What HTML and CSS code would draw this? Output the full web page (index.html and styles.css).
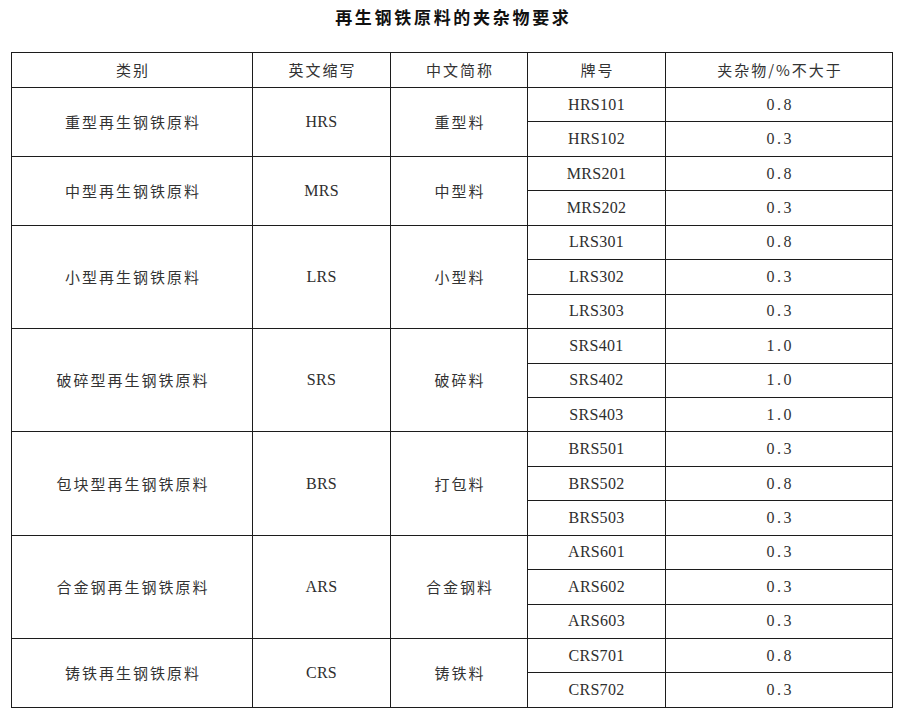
FILE: index.html
```html
<!DOCTYPE html>
<html lang="zh">
<head>
<meta charset="utf-8">
<title>再生钢铁原料的夹杂物要求</title>
<link rel="stylesheet" href="styles.css">
</head>
<body>
<h1 class="title">再生钢铁原料的夹杂物要求</h1>
<table class="spec">
  <colgroup>
    <col class="c1"><col class="c2"><col class="c3"><col class="c4"><col class="c5">
  </colgroup>
  <thead>
    <tr class="head">
      <th class="zh">类别</th><th class="zh">英文缩写</th><th class="zh">中文简称</th><th class="zh">牌号</th><th class="zh">夹杂物/%不大于</th>
    </tr>
  </thead>
  <tbody>
    <tr><td rowspan="2" class="zh">重型再生钢铁原料</td><td rowspan="2" class="en">HRS</td><td rowspan="2" class="zh">重型料</td><td class="en">HRS101</td><td class="num">0.8</td></tr>
    <tr><td class="en">HRS102</td><td class="num">0.3</td></tr>

    <tr><td rowspan="2" class="zh">中型再生钢铁原料</td><td rowspan="2" class="en">MRS</td><td rowspan="2" class="zh">中型料</td><td class="en">MRS201</td><td class="num">0.8</td></tr>
    <tr><td class="en">MRS202</td><td class="num">0.3</td></tr>

    <tr><td rowspan="3" class="zh">小型再生钢铁原料</td><td rowspan="3" class="en">LRS</td><td rowspan="3" class="zh">小型料</td><td class="en">LRS301</td><td class="num">0.8</td></tr>
    <tr><td class="en">LRS302</td><td class="num">0.3</td></tr>
    <tr><td class="en">LRS303</td><td class="num">0.3</td></tr>

    <tr><td rowspan="3" class="zh">破碎型再生钢铁原料</td><td rowspan="3" class="en">SRS</td><td rowspan="3" class="zh">破碎料</td><td class="en">SRS401</td><td class="num">1.0</td></tr>
    <tr><td class="en">SRS402</td><td class="num">1.0</td></tr>
    <tr><td class="en">SRS403</td><td class="num">1.0</td></tr>

    <tr><td rowspan="3" class="zh">包块型再生钢铁原料</td><td rowspan="3" class="en">BRS</td><td rowspan="3" class="zh">打包料</td><td class="en">BRS501</td><td class="num">0.3</td></tr>
    <tr><td class="en">BRS502</td><td class="num">0.8</td></tr>
    <tr><td class="en">BRS503</td><td class="num">0.3</td></tr>

    <tr><td rowspan="3" class="zh">合金钢再生钢铁原料</td><td rowspan="3" class="en">ARS</td><td rowspan="3" class="zh">合金钢料</td><td class="en">ARS601</td><td class="num">0.3</td></tr>
    <tr><td class="en">ARS602</td><td class="num">0.3</td></tr>
    <tr><td class="en">ARS603</td><td class="num">0.3</td></tr>

    <tr><td rowspan="2" class="zh">铸铁再生钢铁原料</td><td rowspan="2" class="en">CRS</td><td rowspan="2" class="zh">铸铁料</td><td class="en">CRS701</td><td class="num">0.8</td></tr>
    <tr><td class="en">CRS702</td><td class="num">0.3</td></tr>
  </tbody>
</table>
</body>
</html>
```
FILE: styles.css
```css
html, body {
  margin: 0;
  padding: 0;
  background: #ffffff;
}

body {
  color: #2b2b2b;
  font-family: "Liberation Serif", "Noto Sans CJK SC", serif;
}

.title {
  margin: 0;
  height: 52px;
  line-height: 34px;
  text-align: center;
  font-family: "Noto Sans CJK SC", sans-serif;
  font-size: 17px;
  font-weight: 700;
  letter-spacing: 2.7px;
  padding-left: 2.7px;
  color: #111111;
}

.spec {
  margin-left: 11px;
  width: 881px;
  border-collapse: collapse;
  table-layout: fixed;
}

.c1 { width: 241px; }
.c2 { width: 138px; }
.c3 { width: 137px; }
.c4 { width: 138px; }
.c5 { width: 227px; }

.spec th,
.spec td {
  border: 1px solid #1c1c1c;
  padding: 0;
  text-align: center;
  vertical-align: middle;
  font-weight: 400;
}

.spec tr.head {
  height: 35px;
}

.spec tbody tr {
  height: 34.45px;
}

.zh {
  font-family: "Noto Sans CJK SC", sans-serif;
  font-size: 15px;
  line-height: 18px;
  letter-spacing: 2px;
  text-indent: 2px;
  color: #333333;
}

.en {
  font-family: "Liberation Serif", serif;
  font-size: 16px;
  letter-spacing: 0.3px;
  color: #2e2e2e;
}

.num {
  font-family: "Liberation Serif", serif;
  font-size: 16px;
  letter-spacing: 2.6px;
  text-indent: 2.6px;
  color: #333333;
}
```
